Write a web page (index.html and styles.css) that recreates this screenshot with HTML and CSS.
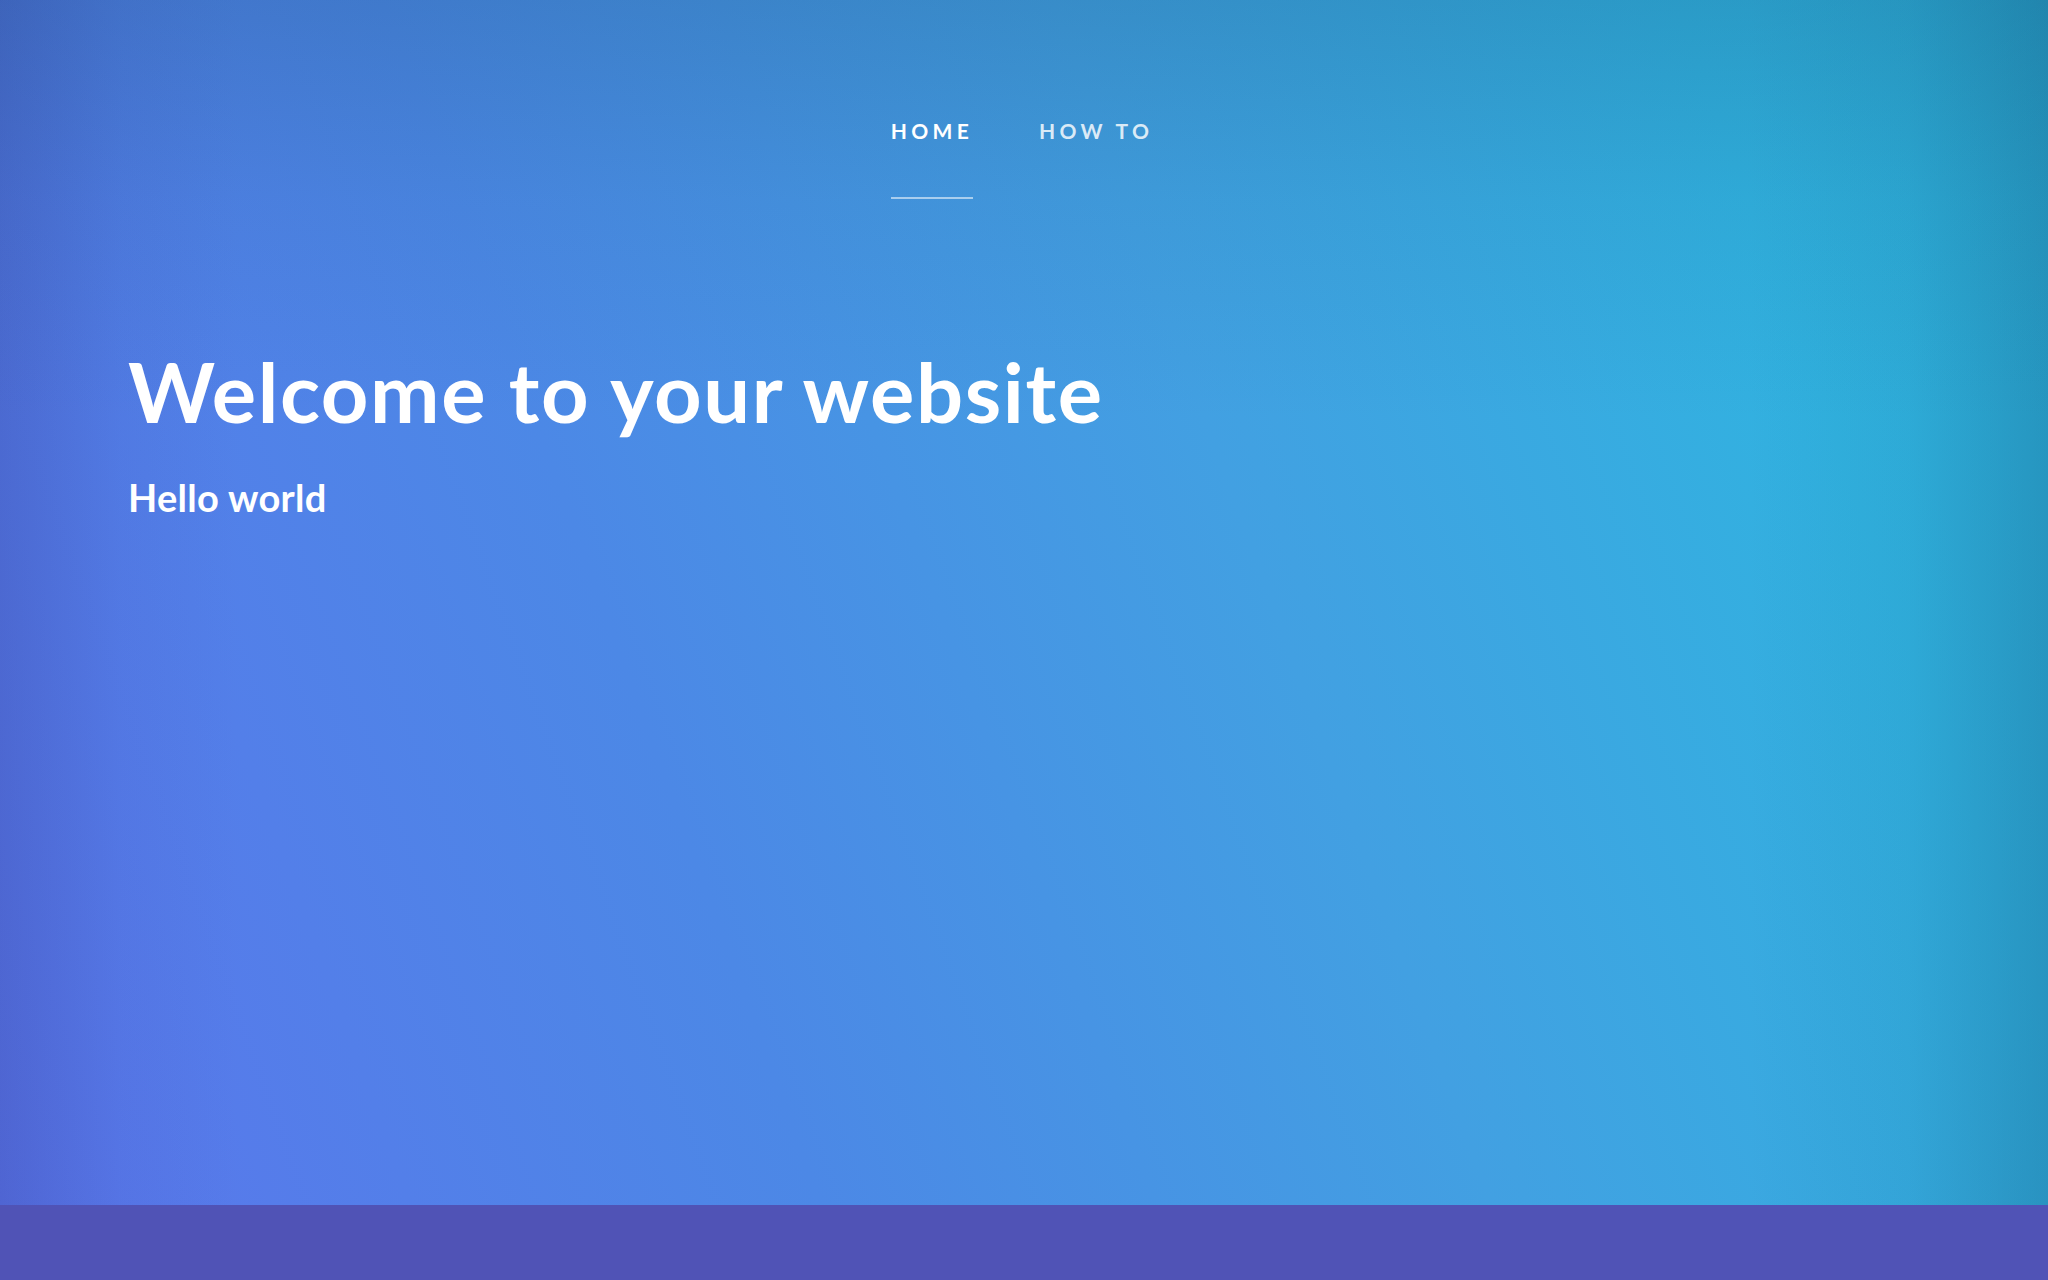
FILE: index.html
```html
<!DOCTYPE html>
<html lang="en">
<head>
<meta charset="utf-8">
<title>Welcome to your website</title>
<link rel="stylesheet" href="styles.css">
</head>
<body>
<section class="hero">
  <nav class="nav">
    <a class="nav-link active" href="#">HOME</a>
    <a class="nav-link" href="#">HOW TO</a>
  </nav>
  <div class="intro">
    <h1 class="title">Welcome to your website</h1>
    <h2 class="subtitle">Hello world</h2>
  </div>
</section>
<footer class="band"></footer>
</body>
</html>
```
FILE: styles.css
```css
html, body {
  margin: 0;
  padding: 0;
}
body {
  font-family: Lato, "Open Sans", sans-serif;
  color: #fff;
  background: #5053b6;
}
.hero {
  height: 1205px;
  box-sizing: border-box;
  padding-top: 118px;
  background:
    linear-gradient(to bottom, rgba(20, 70, 110, 0.22) 0, rgba(20, 70, 110, 0.08) 200px, rgba(20, 70, 110, 0) 420px),
    linear-gradient(to right, rgba(40, 40, 120, 0.22) 0, rgba(40, 40, 120, 0.06) 120px, rgba(40, 40, 120, 0) 240px),
    linear-gradient(to left, rgba(15, 70, 110, 0.28) 0, rgba(15, 70, 110, 0.08) 140px, rgba(15, 70, 110, 0) 300px),
    linear-gradient(70deg, #5a76ec 0%, #4c88e6 33%, #42a0e2 60%, #31b2e0 85%, #2db6de 100%);
}
.nav {
  display: flex;
  justify-content: center;
  gap: 66px;
  padding-right: 4px;
}
.nav-link {
  font-size: 21px;
  font-weight: 700;
  line-height: 1.2;
  letter-spacing: 4.3px;
  color: rgba(255, 255, 255, 0.82);
  text-decoration: none;
  padding-bottom: 54px;
  border-bottom: 2px solid transparent;
}
.nav-link.active {
  color: #fff;
  border-bottom-color: rgba(255, 255, 255, 0.55);
}
.intro {
  padding: 0 128px;
  margin-top: 143px;
}
.title {
  margin: 0;
  font-size: 83px;
  font-weight: 700;
  line-height: 1.2;
  letter-spacing: 1.6px;
}
.subtitle {
  margin: 33px 0 0;
  font-size: 38px;
  font-weight: 700;
  line-height: 1.2;
  letter-spacing: 0.3px;
}
.band {
  height: 75px;
  background: #5053b6;
}
```
